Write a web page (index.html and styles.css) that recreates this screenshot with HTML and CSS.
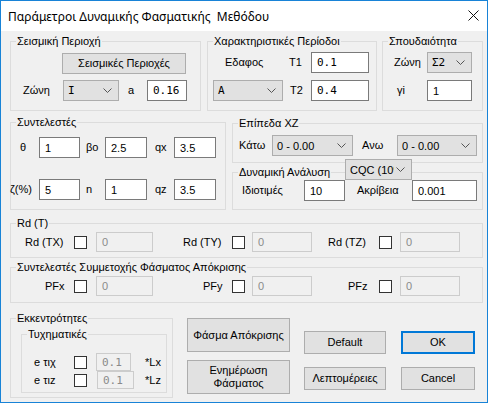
FILE: index.html
```html
<!DOCTYPE html>
<html lang="el">
<head>
<meta charset="utf-8">
<title>Παράμετροι Δυναμικής Φασματικής Μεθόδου</title>
<link rel="stylesheet" href="styles.css">
</head>
<body>
<div class="window">
  <div class="titlebar">
    <span class="title">Παράμετροι Δυναμικής Φασματικής&nbsp; Μεθόδου</span>
    <svg class="close" width="11" height="11" viewBox="0 0 11 11"><path d="M0.5 0.5 L10.5 10.5 M10.5 0.5 L0.5 10.5" stroke="#111" stroke-width="1" fill="none"/></svg>
  </div>
  <div class="content">
    <div class="row r1">
      <div class="group g-seis">
        <span class="cap">Σεισμική Περιοχή</span>
        <div class="line l-btn"><div class="btn btn-seis">Σεισμικές Περιοχές</div></div>
        <div class="line l2">
          <span class="lbl o6">Ζώνη</span>
          <div class="combo mono"><span class="ct">I</span><svg class="chev" width="9" height="5" viewBox="0 0 9 5"><path d="M0.5 0.5 L4.5 4.5 L8.5 0.5" stroke="#555" fill="none"/></svg></div>
          <span class="lbl o9">a</span>
          <div class="edit mono">0.16</div>
        </div>
      </div>
      <div class="group g-char">
        <span class="cap">Χαρακτηριστικές Περίοδοι</span>
        <div class="line">
          <span class="lbl o12">Εδαφος</span>
          <span class="lbl o6">T1</span>
          <div class="edit mono">0.1</div>
        </div>
        <div class="line l2">
          <div class="combo mono"><span class="ct">A</span><svg class="chev" width="9" height="5" viewBox="0 0 9 5"><path d="M0.5 0.5 L4.5 4.5 L8.5 0.5" stroke="#555" fill="none"/></svg></div>
          <span class="lbl o7">T2</span>
          <div class="edit mono">0.4</div>
        </div>
      </div>
      <div class="group g-spoud">
        <span class="cap">Σπουδαιότητα</span>
        <div class="line">
          <span class="lbl">Ζώνη</span>
          <div class="combo mono"><span class="ct">Σ2</span><svg class="chev" width="9" height="5" viewBox="0 0 9 5"><path d="M0.5 0.5 L4.5 4.5 L8.5 0.5" stroke="#555" fill="none"/></svg></div>
        </div>
        <div class="line l2">
          <span class="lbl o3">γi</span>
          <div class="edit">1</div>
        </div>
      </div>
    </div>

    <div class="row r2">
      <div class="group g-synt">
        <span class="cap">Συντελεστές</span>
        <div class="line">
          <span class="lbl o9">θ</span>
          <div class="edit">1</div>
          <span class="lbl o6">βo</span>
          <div class="edit">2.5</div>
          <span class="lbl o8">qx</span>
          <div class="edit">3.5</div>
        </div>
        <div class="line l2">
          <span class="lbl neg1">ζ(%)</span>
          <div class="edit">5</div>
          <span class="lbl o6">n</span>
          <div class="edit">1</div>
          <span class="lbl o8">qz</span>
          <div class="edit">3.5</div>
        </div>
      </div>
      <div class="rcol">
        <div class="group g-epip">
          <span class="cap">Επίπεδα XZ</span>
          <div class="line">
            <span class="lbl">Κάτω</span>
            <div class="combo"><span class="ct">0 - 0.00</span><svg class="chev" width="9" height="5" viewBox="0 0 9 5"><path d="M0.5 0.5 L4.5 4.5 L8.5 0.5" stroke="#555" fill="none"/></svg></div>
            <span class="lbl o9">Ανω</span>
            <div class="combo"><span class="ct">0 - 0.00</span><svg class="chev" width="9" height="5" viewBox="0 0 9 5"><path d="M0.5 0.5 L4.5 4.5 L8.5 0.5" stroke="#555" fill="none"/></svg></div>
          </div>
        </div>
        <div class="group g-dyn">
          <span class="cap">Δυναμική Ανάλυση</span>
          <div class="combo cqc"><span class="ct clip">CQC (10%)</span><svg class="chev" width="9" height="5" viewBox="0 0 9 5"><path d="M0.5 0.5 L4.5 4.5 L8.5 0.5" stroke="#555" fill="none"/></svg></div>
          <div class="line">
            <span class="lbl">Ιδιοτιμές</span>
            <div class="edit">10</div>
            <span class="lbl o12">Ακρίβεια</span>
            <div class="edit">0.001</div>
          </div>
        </div>
      </div>
    </div>

    <div class="group g-rd">
      <span class="cap">Rd (T)</span>
      <div class="line">
        <span class="lbl o14">Rd (TX)</span>
        <div class="cbcell"><span class="cb"></span></div>
        <div class="edit dis">0</div>
        <span class="lbl o30">Rd (TY)</span>
        <div class="cbcell"><span class="cb"></span></div>
        <div class="edit dis">0</div>
        <span class="lbl o16">Rd (TZ)</span>
        <div class="cbcell"><span class="cb"></span></div>
        <div class="edit dis">0</div>
      </div>
    </div>

    <div class="group g-pf">
      <span class="cap">Συντελεστές Συμμετοχής Φάσματος Απόκρισης</span>
      <div class="line">
        <span class="lbl o34">PFx</span>
        <div class="cbcell"><span class="cb"></span></div>
        <div class="edit dis">0</div>
        <span class="lbl o50">PFy</span>
        <div class="cbcell"><span class="cb"></span></div>
        <div class="edit dis">0</div>
        <span class="lbl o36">PFz</span>
        <div class="cbcell"><span class="cb"></span></div>
        <div class="edit dis">0</div>
      </div>
    </div>

    <div class="row r5">
      <div class="group g-ekk">
        <span class="cap">Εκκεντρότητες</span>
        <div class="group g-tyx">
          <span class="cap">Τυχηματικές</span>
          <div class="line">
            <span class="lbl">e τιχ</span>
            <div class="cbcell"><span class="cb"></span></div>
            <div class="edit dis mono e1">0.1</div>
            <span class="lbl o11">*Lx</span>
          </div>
          <div class="line">
            <span class="lbl">e τιz</span>
            <div class="cbcell"><span class="cb"></span></div>
            <div class="edit dis mono e2">0.1</div>
            <span class="lbl o11">*Lz</span>
          </div>
        </div>
      </div>
      <div class="bcol">
        <div class="btn big">Φάσμα Απόκρισης</div>
        <div class="btn big">Ενημέρωση<br>Φάσματος</div>
      </div>
      <div class="bgrid">
        <div class="btn">Default</div>
        <div class="btn def">OK</div>
        <div class="btn">Λεπτομέρειες</div>
        <div class="btn">Cancel</div>
      </div>
    </div>
  </div>
</div>
</body>
</html>
```

FILE: styles.css
```css
* { box-sizing: border-box; }
html, body { margin: 0; padding: 0; }
body {
  width: 490px;
  height: 407px;
  background: #ffffff;
  font-family: "Liberation Sans", Arial, sans-serif;
  font-size: 11px;
  color: #000;
  overflow: hidden;
}
.window {
  width: 488px;
  height: 403px;
  border: 1px solid #1883d7;
  display: flex;
  flex-direction: column;
  background: #f0f0f0;
}
.titlebar {
  height: 30px;
  flex: none;
  background: #fff;
  display: flex;
  align-items: center;
  padding-left: 7px;
  position: relative;
}
.title {
  font-family: "Noto Sans", "Open Sans", sans-serif;
  font-size: 12px;
  color: #000;
}
.close {
  position: absolute;
  right: 8px;
  top: 9px;
}
.content {
  flex: 1;
  padding: 10px 0 0 9px;
  display: flex;
  flex-direction: column;
}
.row { display: flex; }
.group {
  position: relative;
  border: 1px solid #dcdcdc;
  flex: none;
}
.cap {
  position: absolute;
  top: -8px;
  left: 5px;
  padding: 0 1px;
  background: #f0f0f0;
  line-height: 14px;
  white-space: nowrap;
}
.line { display: grid; height: 21px; align-items: center; }
.lbl { white-space: nowrap; line-height: 13px; }
.o3 { padding-left: 3px; }
.o6 { padding-left: 6px; }
.o7 { padding-left: 7px; }
.o8 { padding-left: 8px; }
.o9 { padding-left: 9px; }
.o11 { padding-left: 11px; }
.o12 { padding-left: 12px; }
.o14 { padding-left: 14px; }
.o16 { padding-left: 16px; }
.o30 { padding-left: 30px; }
.o34 { padding-left: 34px; }
.o36 { padding-left: 36px; }
.o50 { padding-left: 50px; }
.neg1 { margin-left: -1px; }
.mono { font-family: "DejaVu Sans Mono", "Liberation Mono", monospace; font-size: 11px; }

.edit {
  height: 21px;
  background: #fff;
  border: 1px solid #7a7a7a;
  padding-left: 5px;
  display: flex;
  align-items: center;
  white-space: nowrap;
  overflow: hidden;
}
.edit.dis {
  background: #f0f0f0;
  border-color: #cccccc;
  color: #8a8a8a;
  height: 20px;
}
.combo {
  height: 21px;
  background: #e1e1e1;
  border: 1px solid #adadad;
  display: flex;
  align-items: center;
  position: relative;
  padding-left: 4px;
  overflow: hidden;
  white-space: nowrap;
}
.chev {
  position: absolute;
  right: 6px;
  top: 7px;
}
.btn {
  background: #e1e1e1;
  border: 1px solid #adadad;
  display: flex;
  align-items: center;
  justify-content: center;
  text-align: center;
  line-height: 13px;
}
.cbcell { display: flex; align-items: center; }
.cb {
  width: 13px;
  height: 13px;
  background: #fff;
  border: 1px solid #333;
  display: block;
}

/* Row 1 */
.g-seis { width: 191px; height: 70px; padding: 11px 0 0 0; }
.l-btn { display: flex; padding-left: 51px; }
.btn-seis { width: 124px; height: 21px; }
.g-seis .l2 { margin-top: 6px; padding-left: 6px; grid-template-columns: 46px 56px 28px 40px; }
.g-char { width: 170px; height: 70px; margin-left: 6px; padding: 10px 0 0 5px; }
.g-char .line { grid-template-columns: 70px 28px 58px; }
.l2 { margin-top: 7px; }
.g-spoud { width: 101px; height: 70px; margin-left: 5px; padding: 10px 0 0 11px; }
.g-spoud .line { grid-template-columns: 33px 45px; }

/* Row 2 */
.r2 { margin-top: 11px; }
.g-synt { width: 216px; height: 88px; padding: 14px 0 0 0; }
.g-synt .line { grid-template-columns: 28px 41px 25px 42px 27px 42px; }
.g-synt .l2 { margin-top: 21px; }
.rcol { margin-left: 6px; margin-top: 1px; display: flex; flex-direction: column; }
.g-epip { width: 251px; height: 40px; padding: 11px 0 0 6px; }
.g-epip .line { grid-template-columns: 33px 81px 44px 80px; }
.g-dyn { width: 251px; height: 38px; margin-top: 9px; padding: 7px 0 0 9px; }
.g-dyn .line { grid-template-columns: 62px 41px 67px 65px; }
.cqc {
  position: absolute;
  left: 112px;
  top: -14px;
  width: 67px;
}
.clip {
  display: block;
  width: 44px;
  overflow: hidden;
  white-space: nowrap;
}

/* Rows 3, 4 */
.g-rd, .g-pf { width: 473px; padding: 8px 0 0 0; }
.g-rd { height: 35px; margin-top: 13px; }
.g-pf { height: 36px; margin-top: 9px; }
.g-rd .line, .g-pf .line { height: 20px; grid-template-columns: 63px 22px 57px 79px 20px 60px 67px 21px 60px; }

/* Row 5 */
.r5 { margin-top: 15px; align-items: flex-start; }
.g-ekk { width: 163px; height: 80px; padding: 15px 0 0 10px; }
.g-tyx { width: 146px; height: 59px; padding: 18px 0 0 12px; }
.g-tyx .line { height: 18px; grid-template-columns: 40px 22px 38px auto; }
.g-tyx .edit { height: 18px; }
.e1 { width: 35px; }
.e2 { width: 37px; margin-left: 1px; }
.bcol { margin-left: 14px; display: flex; flex-direction: column; gap: 8px; }
.btn.big { width: 103px; height: 34px; }
.bgrid {
  margin-left: 14px;
  margin-top: 13px;
  display: grid;
  grid-template-columns: 82px 74px;
  grid-template-rows: 23px 23px;
  column-gap: 15px;
  row-gap: 13px;
}
.btn.def { border: 1px solid #0078d7; box-shadow: inset 0 0 0 1px #0078d7; }
```
